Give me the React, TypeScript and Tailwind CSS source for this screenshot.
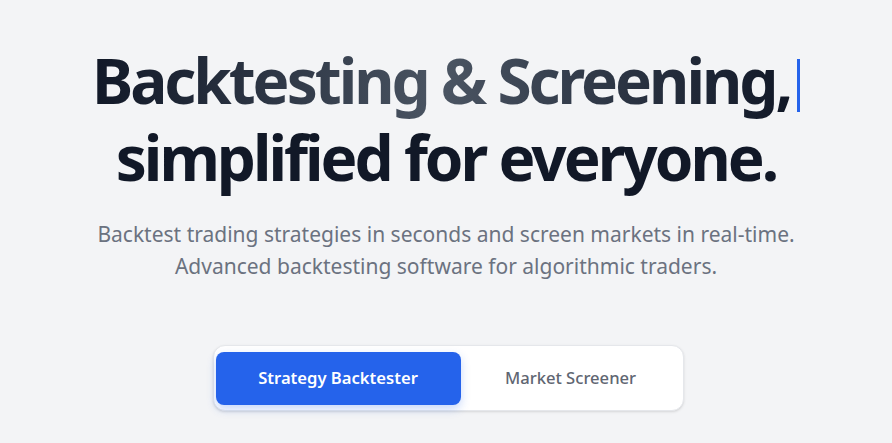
import React from 'react';

export default function App() {
  return (
    <div
      className="min-h-screen w-full bg-[#f3f4f6] flex flex-col items-center"
      style={{ fontFamily: '"Noto Sans", "Open Sans", sans-serif' }}
    >
      <h1 className="mt-[42px] text-center text-[62px] font-bold leading-[77px] tracking-[-3px] text-[#111827]">
        <span className="bg-gradient-to-r from-[#111827] via-[#4b5563] to-[#111827] bg-clip-text text-transparent">
          Backtesting &amp; Screening,
        </span>
        <span className="ml-[7px] inline-block h-[53px] w-[3px] translate-y-[8px] bg-[#2563eb]" />
        <br />
        simplified for everyone.
      </h1>

      <p className="mt-[22px] text-center text-[21px] leading-[32px] text-[#6b7280]">
        Backtest trading strategies in seconds and screen markets in real-time.
        <br />
        Advanced backtesting software for algorithmic traders.
      </p>

      <div className="ml-[4px] mt-[63px] flex items-center rounded-xl border border-[#e5e7eb] bg-white px-[2px] pt-[6px] pb-[5px] shadow-sm">
        <button className="h-[53px] w-[245px] rounded-lg bg-[#2563eb] text-[16.6px] font-semibold text-white shadow-[0_4px_10px_rgba(37,99,235,0.25)]">
          Strategy Backtester
        </button>
        <button className="h-[53px] w-[220px] rounded-lg text-[16.6px] font-medium text-[#5f6672]">
          Market Screener
        </button>
      </div>
    </div>
  );
}
